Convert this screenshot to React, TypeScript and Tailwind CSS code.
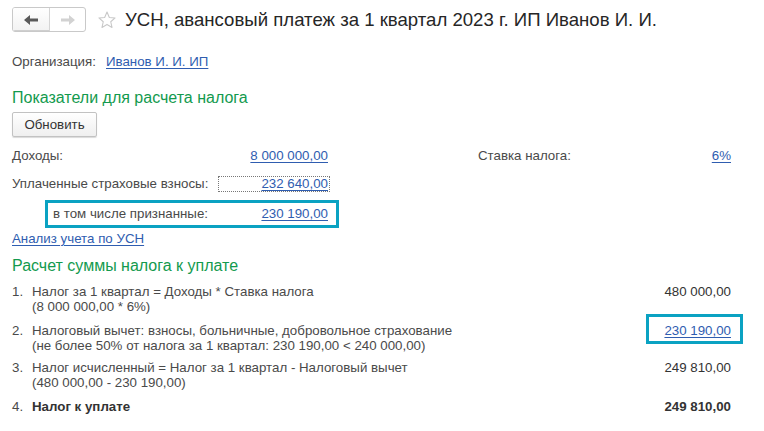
import React from "react";

const items = [
  {
    n: "1.",
    lines: ["Налог за 1 квартал = Доходы * Ставка налога", "(8 000 000,00 * 6%)"],
    value: "480 000,00",
  },
  {
    n: "2.",
    lines: [
      "Налоговый вычет: взносы, больничные, добровольное страхование",
      "(не более 50% от налога за 1 квартал: 230 190,00 < 240 000,00)",
    ],
    value: "230 190,00",
    link: true,
  },
  {
    n: "3.",
    lines: ["Налог исчисленный = Налог за 1 квартал - Налоговый вычет", "(480 000,00 - 230 190,00)"],
    value: "249 810,00",
  },
];

function Arrow({ dir, color }: { dir: "left" | "right"; color: string }) {
  return (
    <svg width="14" height="10" viewBox="0 0 14 10" className={dir === "right" ? "rotate-180" : ""}>
      <path d="M0 5 L6 0 L6 3.5 L14 3.5 L14 6.5 L6 6.5 L6 10 Z" fill={color} />
    </svg>
  );
}

export default function App() {
  return (
    <div className="w-[764px] h-[431px] bg-white px-[12px] pt-[7px] text-[13.3px] text-[#4a4a4a] font-['Liberation_Sans',Arial,sans-serif] overflow-hidden">
      {/* Header */}
      <div className="flex items-center h-[25px]">
        <div className="flex h-[25px] w-[74px] border border-[#c9c9c9] rounded-[3px] bg-white overflow-hidden">
          <div className="w-[37px] flex items-center justify-center border-r border-[#d5d5d5] bg-gradient-to-b from-white to-[#f2f2f2] shadow-[inset_0_-1px_0_#cfcfcf]">
            <Arrow dir="left" color="#5a5a5a" />
          </div>
          <div className="flex-1 flex items-center justify-center">
            <Arrow dir="right" color="#d2d2d2" />
          </div>
        </div>
        <svg width="20" height="20" viewBox="0 0 24 24" className="ml-[11px]">
          <path
            d="M12 2.5 L14.8 8.9 L21.7 9.5 L16.5 14.1 L18 20.9 L12 17.3 L6 20.9 L7.5 14.1 L2.3 9.5 L9.2 8.9 Z"
            fill="none"
            stroke="#c8c8c8"
            strokeWidth="1.3"
            strokeLinejoin="round"
          />
        </svg>
        <h1 className="ml-[8px] text-[18.6px] leading-[25px] text-[#262626]">
          УСН, авансовый платеж за 1 квартал 2023 г. ИП Иванов И. И.
        </h1>
      </div>

      {/* Organization */}
      <div className="mt-[22px] flex leading-[16px]">
        <span className="w-[94px]">Организация:</span>
        <a className="text-[#2f5db0] underline underline-offset-2">Иванов И. И. ИП</a>
      </div>

      {/* Indicators */}
      <h2 className="mt-[18px] text-[16px] leading-[20px] text-[#139a4e]">Показатели для расчета налога</h2>
      <button className="mt-[4px] h-[25px] w-[85px] border border-[#c2c2c2] rounded-[2px] bg-gradient-to-b from-white to-[#efefef] shadow-[0_1px_1px_rgba(0,0,0,0.15)] text-[#333]">
        Обновить
      </button>

      <div className="mt-[11px] flex leading-[16px]">
        <div className="w-[318px] flex justify-between">
          <span>Доходы:</span>
          <a className="pr-[2px] text-[#2f5db0] underline underline-offset-2">8 000 000,00</a>
        </div>
        <div className="ml-[148px] w-[253px] flex justify-between">
          <span>Ставка налога:</span>
          <a className="text-[#2f5db0] underline underline-offset-2">6%</a>
        </div>
      </div>

      <div className="mt-[12px] flex items-center w-[318px] leading-[14px]">
        <span className="w-[206px]">Уплаченные страховые взносы:</span>
        <div className="flex-1 h-[16px] border border-dotted border-[#777] flex justify-end items-center pr-[1px]">
          <a className="text-[#2f5db0] underline underline-offset-2">232 640,00</a>
        </div>
      </div>

      <div className="mt-[8px] ml-[33px] w-[294px] h-[28px] border-[3px] border-[#0aa2c2] flex items-center justify-between pl-[5px] pr-[8px]">
        <span>в том числе признанные:</span>
        <a className="text-[#2f5db0] underline underline-offset-2">230 190,00</a>
      </div>

      <div className="mt-[3px] leading-[16px]">
        <a className="text-[#2f5db0] underline underline-offset-2">Анализ учета по УСН</a>
      </div>

      {/* Calculation */}
      <h2 className="mt-[9px] text-[16px] leading-[20px] text-[#139a4e]">Расчет суммы налога к уплате</h2>

      <div className="w-[731px] mt-[8px] leading-[15px]">
        {items.map((it, i) => (
          <div key={it.n} className={`flex items-start ${i === 1 ? "mt-0" : i === 2 ? "mt-[7px]" : ""}`}>
            <span className="w-[20px] shrink-0" style={{ paddingTop: it.link ? 9 : 0 }}>{it.n}</span>
            <div className="flex-1" style={{ paddingTop: it.link ? 9 : 0 }}>
              {it.lines.map((l) => (
                <div key={l}>{l}</div>
              ))}
            </div>
            {it.link ? (
              <div className="w-[97px] h-[30px] border-[3px] border-[#0aa2c2] flex items-center justify-end pr-[9px] pt-[2px]">
                <a className="text-[#2f5db0] underline underline-offset-2">{it.value}</a>
              </div>
            ) : (
              <div className="w-[97px] text-right pr-[12px] text-[#333]">{it.value}</div>
            )}
          </div>
        ))}
        <div className="mt-[9px] flex font-bold text-[#333]">
          <span className="w-[20px] font-normal text-[#4a4a4a]">4.</span>
          <span className="flex-1">Налог к уплате</span>
          <span className="w-[97px] text-right pr-[12px]">249 810,00</span>
        </div>
      </div>
    </div>
  );
}
